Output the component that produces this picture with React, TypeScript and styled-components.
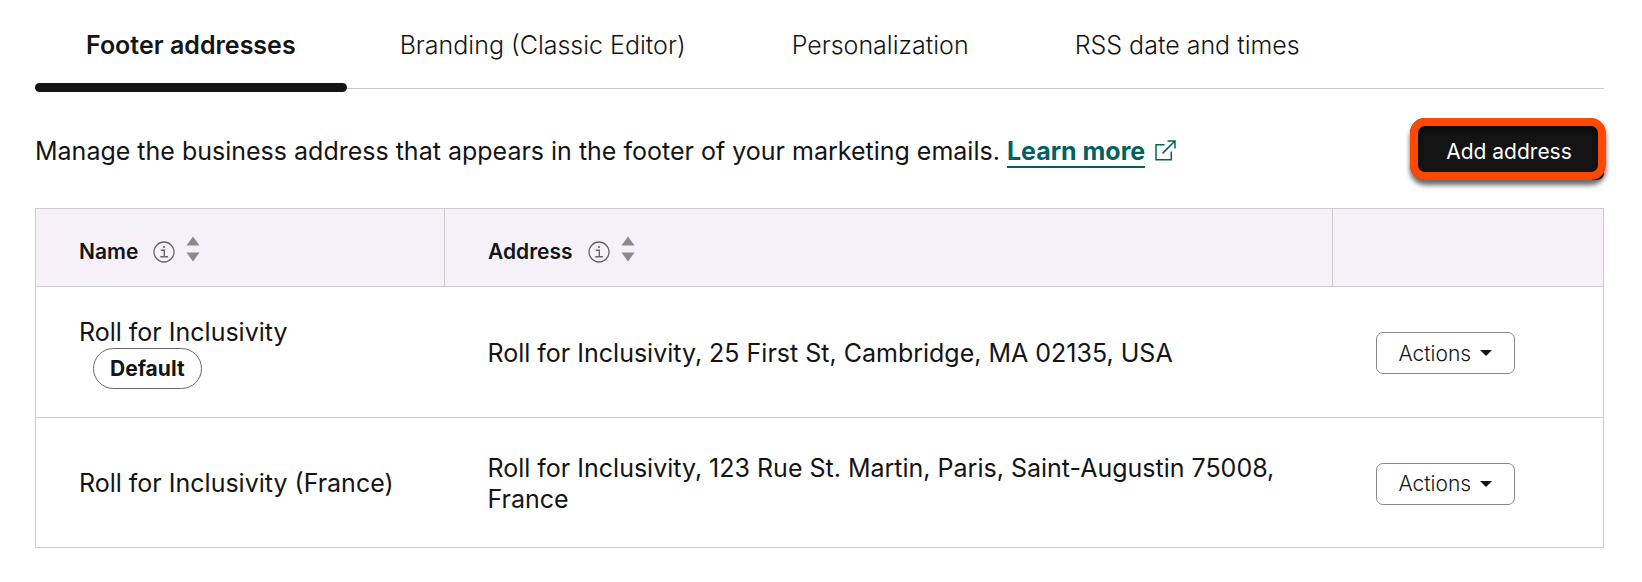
import React from "react";
import styled, { createGlobalStyle } from "styled-components";

const GlobalStyle = createGlobalStyle`
  *, *::before, *::after { box-sizing: border-box; }
  body {
    margin: 0;
    background: #fff;
    color: #141414;
    font: 400 25px/31px Inter, "Noto Sans", sans-serif;
  }
  button { font: inherit; color: inherit; cursor: pointer; }
`;

const Page = styled.main`
  padding: 3px 38px 34px 35px;
`;

const TabBar = styled.nav`
  display: flex;
  border-bottom: 1px solid #cbcbcb;
`;

const Tab = styled.a<{ $active?: boolean }>`
  position: relative;
  padding: 27px ${(p) => (p.$active ? 51 : 53)}px;
  color: inherit;
  text-decoration: none;
  white-space: nowrap;
  font-weight: ${(p) => (p.$active ? 600 : 300)};

  &::after {
    content: ${(p) => (p.$active ? '""' : "none")};
    position: absolute;
    left: 0;
    right: 0;
    bottom: -4px;
    height: 9px;
    border-radius: 5px;
    background: #141414;
  }
`;

const Intro = styled.section`
  display: flex;
  align-items: center;
  justify-content: space-between;
  gap: 32px;
  margin-bottom: 28px;
  padding-top: 29px;
`;

const IntroText = styled.p`
  margin: 0;
  padding-top: 6px;
`;

const LearnMore = styled.a`
  display: inline-flex;
  align-items: center;
  gap: 10px;
  color: #006162;
  font-weight: 700;
  text-decoration: none;

  span { border-bottom: 2px solid #006162; line-height: 30px; }
  svg { margin-bottom: 4px; }
`;

const AddButton = styled.button`
  position: relative;
  flex: none;
  min-width: 194px;
  height: 62px;
  padding: 4px 32px 0 36px;
  border: 0;
  border-radius: 15px 15px 7px 15px;
  background: #141414;
  color: #fff;
  font-size: 21px;

  &::after {
    content: "";
    position: absolute;
    inset: 0 -2px 0 0;
    border: 8px solid #ff4800;
    border-radius: 15px;
    box-shadow: 0 5px 5px rgba(0, 0, 0, 0.6), inset 0 5px 5px rgba(0, 0, 0, 0.6);
  }
`;

const Table = styled.table`
  width: 100%;
  table-layout: fixed;
  border-collapse: collapse;
  border: 1px solid #cbcbcb;
`;

const Column = styled.col<{ $width?: number }>`
  width: ${(p) => (p.$width ? `${p.$width}px` : "auto")};
`;

const HeadCell = styled.th`
  height: 78px;
  padding: 8px 43px 0;
  border: 1px solid #cbcbcb;
  background: #f6f1f8;
  font-size: 21px;
  font-weight: 600;
  text-align: left;
`;

const HeadLabel = styled.div`
  display: flex;
  align-items: center;
  gap: 15px;
`;

const HeadIcons = styled.span`
  display: flex;
  align-items: center;
  gap: 11px;
`;

const SortButton = styled.button`
  display: flex;
  padding: 0 0 5px;
  border: 0;
  background: none;
`;

const Row = styled.tr`
  border-bottom: 1px solid #cbcbcb;
`;

const Cell = styled.td`
  height: 130px;
  padding: 30px 43px 28px;
`;

const Badge = styled.span`
  display: block;
  width: fit-content;
  margin-left: 14px;
  padding: 4px 16px;
  border: 1px solid #666;
  border-radius: 21px;
  font-size: 21px;
  font-weight: 700;
`;

const ActionsButton = styled.button`
  display: flex;
  align-items: center;
  gap: 9px;
  height: 42px;
  padding: 0 22px;
  border: 1px solid #8a8a8a;
  border-radius: 7px;
  background: #fff;
  font-size: 21px;
  font-weight: 300;
  white-space: nowrap;
`;

const InfoIcon = () => (
  <svg width="22" height="22" viewBox="0 0 22 22" fill="none" stroke="#666" strokeWidth="1.3" aria-hidden="true">
    <circle cx="11" cy="11" r="10" />
    <path d="M7.8 9.3h3.5v6.2M7.3 15.7h7.6" strokeWidth="1.4" />
    <circle cx="11" cy="6" r="1.1" fill="#666" stroke="none" />
  </svg>
);

const SortIcon = () => (
  <svg width="14" height="26" viewBox="0 0 14 26" fill="#8a8a8a" aria-hidden="true">
    <path d="M7 0.5 13.5 9.5H0.5zM7 25.5 0.5 16.5h13z" />
  </svg>
);

const CaretIcon = () => (
  <svg width="12" height="6" viewBox="0 0 12 6" fill="#141414" aria-hidden="true">
    <path d="M0 0h12L6 6z" />
  </svg>
);

const ExternalIcon = () => (
  <svg width="21" height="21" viewBox="0 0 21 21" fill="none" stroke="#006162" strokeWidth="1.5" aria-hidden="true">
    <path d="M9.5 4.8H1v15h15.3V11.5M12.5 1H20v7.5M20 1 7.5 13.4" />
  </svg>
);

const tabs = ["Footer addresses", "Branding (Classic Editor)", "Personalization", "RSS date and times"];

const addresses = [
  {
    name: "Roll for Inclusivity",
    isDefault: true,
    address: "Roll for Inclusivity, 25 First St, Cambridge, MA 02135, USA",
  },
  {
    name: "Roll for Inclusivity (France)",
    isDefault: false,
    address: "Roll for Inclusivity, 123 Rue St. Martin, Paris, Saint-Augustin 75008, France",
  },
];

const SortableHead = ({ label }: { label: string }) => (
  <HeadCell scope="col">
    <HeadLabel>
      {label}
      <HeadIcons>
        <InfoIcon />
        <SortButton type="button" aria-label={`Sort by ${label}`}>
          <SortIcon />
        </SortButton>
      </HeadIcons>
    </HeadLabel>
  </HeadCell>
);

export default function App() {
  return (
    <Page>
      <GlobalStyle />
      <TabBar>
        {tabs.map((tab, i) => (
          <Tab key={tab} href="#" $active={i === 0} aria-current={i === 0 ? "page" : undefined}>
            {tab}
          </Tab>
        ))}
      </TabBar>
      <Intro>
        <IntroText>
          Manage the business address that appears in the footer of your marketing emails.{" "}
          <LearnMore href="#">
            <span>Learn more</span>
            <ExternalIcon />
          </LearnMore>
        </IntroText>
        <AddButton type="button">Add address</AddButton>
      </Intro>
      <Table>
        <colgroup>
          <Column $width={409} />
          <Column />
          <Column $width={271} />
        </colgroup>
        <thead>
          <tr>
            <SortableHead label="Name" />
            <SortableHead label="Address" />
            <HeadCell as="td" />
          </tr>
        </thead>
        <tbody>
          {addresses.map((row) => (
            <Row key={row.name}>
              <Cell>
                {row.name}
                {row.isDefault && <Badge>Default</Badge>}
              </Cell>
              <Cell>{row.address}</Cell>
              <Cell>
                <ActionsButton type="button">
                  Actions
                  <CaretIcon />
                </ActionsButton>
              </Cell>
            </Row>
          ))}
        </tbody>
      </Table>
    </Page>
  );
}
